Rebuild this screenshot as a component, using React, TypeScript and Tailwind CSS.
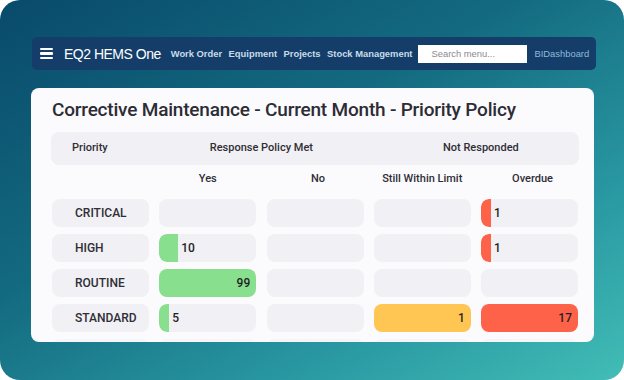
import React from "react";

type Cell = { v?: number; w?: number; color?: string; full?: boolean };

const GREEN = "bg-[#88df8d]";
const RED = "bg-[#fe634a]";
const YELLOW = "bg-[#ffc654]";

const rows: { name: string; cells: Cell[] }[] = [
  { name: "CRITICAL", cells: [{}, {}, {}, { v: 1, w: 10, color: RED }] },
  { name: "HIGH", cells: [{ v: 10, w: 19, color: GREEN }, {}, {}, { v: 1, w: 10, color: RED }] },
  { name: "ROUTINE", cells: [{ v: 99, full: true, color: GREEN }, {}, {}, {}] },
  { name: "STANDARD", cells: [{ v: 5, w: 10, color: GREEN }, {}, { v: 1, full: true, color: YELLOW }, { v: 17, full: true, color: RED }] },
];

function DataCell({ c }: { c: Cell }) {
  if (c.full) {
    return (
      <div className={`h-[28px] rounded-[8px] ${c.color} flex items-center justify-end pr-[6px] text-[12px] font-medium text-[#1f1f24]`}>
        {c.v}
      </div>
    );
  }
  return (
    <div className="h-[28px] rounded-[8px] bg-[#f1f0f4] flex items-center overflow-hidden">
      {c.v !== undefined && (
        <>
          <div className={`h-full rounded-l-[8px] ${c.color}`} style={{ width: c.w }} />
          <span className="ml-[3px] text-[12px] font-medium text-[#1f1f24]">{c.v}</span>
        </>
      )}
    </div>
  );
}

export default function App() {
  return (
    <div className="w-[624px] h-[380px] bg-white">
      <div className="w-[624px] h-[380px] rounded-[20px] overflow-hidden bg-[linear-gradient(150deg,#094a6b_0%,#136a80_40%,#2a9aa3_75%,#42bdb6_100%)] pt-[37px] pl-[31px]">
        {/* Navbar */}
        <div
          className="ml-[1px] w-[564px] h-[33px] rounded-[5px] bg-[#143e69] flex items-center pl-[8px]"
          style={{ fontFamily: '"Liberation Sans", Arial, sans-serif' }}
        >
          <div className="flex flex-col gap-[2px] w-[13px]">
            <div className="h-[2.5px] bg-white rounded-[1px]" />
            <div className="h-[2.5px] bg-white rounded-[1px]" />
            <div className="h-[2.5px] bg-white rounded-[1px]" />
          </div>
          <span className="ml-[11px] text-white text-[14px] tracking-[-0.5px] leading-none">EQ2 HEMS One</span>
          <div className="ml-[10px] flex items-center gap-[6.5px] text-[9.4px] font-bold text-[#c9dbe9] leading-none">
            <span>Work Order</span>
            <span>Equipment</span>
            <span>Projects</span>
            <span>Stock Management</span>
          </div>
          <div className="ml-[6px] w-[109px] h-[18px] bg-white flex items-center pl-[13px] text-[9.4px] text-[#8a8a8a] leading-none">
            Search menu...
          </div>
          <span className="ml-[7px] text-[9.4px] text-[#8bb9d9] leading-none">BIDashboard</span>
        </div>

        {/* Card */}
        <div
          className="mt-[18px] w-[563px] h-[254px] rounded-[8px] bg-[#fbfafd] overflow-hidden pl-[20px] pr-[15px] pt-[10px]"
          style={{ fontFamily: 'Roboto, "Noto Sans", sans-serif' }}
        >
          <div className="text-[19px] leading-[24px] tracking-[-0.2px] font-medium text-[#2d2c35] ml-[1px]">
            Corrective Maintenance - Current Month - Priority Policy
          </div>

          <div className="mt-[10px] h-[33px] rounded-[8px] bg-[#f1f0f4] grid grid-cols-5 gap-x-[10.25px] px-[1px] items-center text-[11px] font-medium text-[#2f2e36]">
            <div className="pl-[20px]">Priority</div>
            <div className="col-span-2 text-center">Response Policy Met</div>
            <div className="col-span-2 text-center pl-[10px]">Not Responded</div>
          </div>

          <div className="grid grid-cols-5 gap-x-[10.25px] px-[1px] pt-[7px] pb-[13px] leading-[14px] text-[11px] font-medium text-[#2f2e36]">
            <div />
            <div className="text-center">Yes</div>
            <div className="text-center pl-[6px]">No</div>
            <div className="text-center">Still Within Limit</div>
            <div className="text-center pl-[6px]">Overdue</div>
          </div>

          <div className="flex flex-col gap-[7px] px-[1px]">
            {rows.map((r) => (
              <div key={r.name} className="grid grid-cols-5 gap-x-[10.25px]">
                <div className="h-[28px] rounded-[8px] bg-[#f1f0f4] flex items-center pl-[23px] text-[12px] font-medium text-[#2f2e36]">
                  {r.name}
                </div>
                {r.cells.map((c, i) => (
                  <DataCell key={i} c={c} />
                ))}
              </div>
            ))}
            <div className="grid grid-cols-5 gap-x-[10.25px] opacity-50">
              {[0, 1, 2, 3, 4].map((i) => (
                <div key={i} className="h-[28px] rounded-[8px] bg-[#f1f0f4]" />
              ))}
            </div>
          </div>
        </div>
      </div>
    </div>
  );
}
